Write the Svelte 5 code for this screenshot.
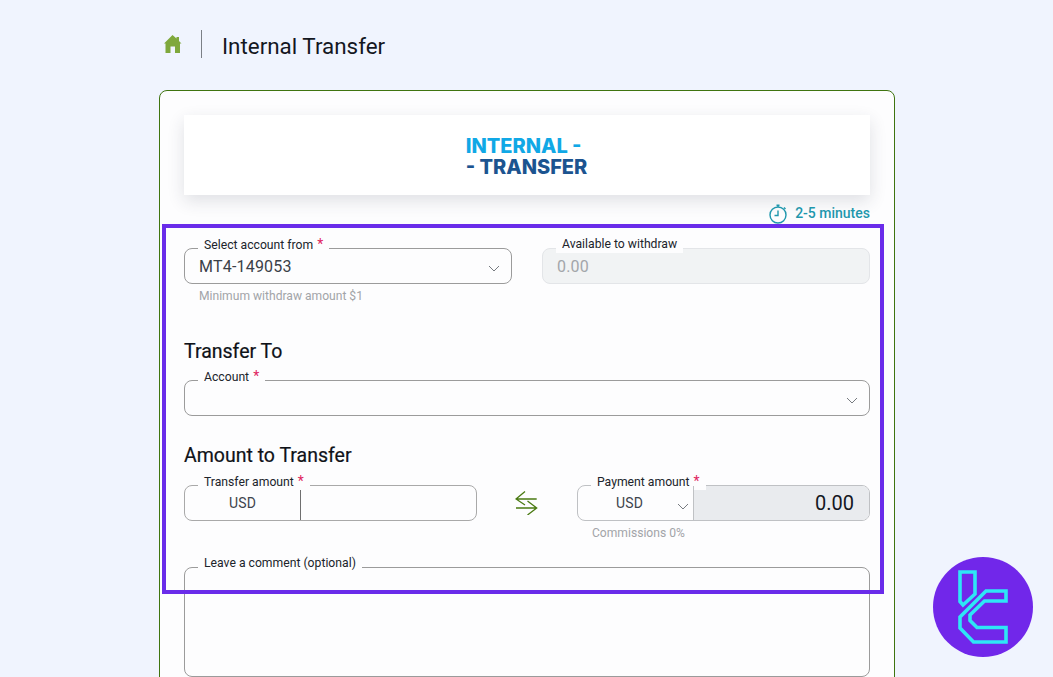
<script>
  const logoA = "37,25 52,25 52,47 40,58 37,54.500";
  const logoB = "83,44 63,44 37,70 37,81 50.500,95 83,95 83,80.500 54,80.500 47,73.500 47,68 61.500,54 83,54";
</script>

<div class="page">
  <header class="head">
    <svg class="home" viewBox="0 0 18 18" aria-hidden="true">
      <path d="M8.500 0 L12.500 3.600 V2 H15 V6 L17.500 8.500 H16 V18 H11 V11.500 H6.500 V18 H1.500 V8.500 H0 Z" fill="#7fa83c" />
    </svg>
    <span class="sep"></span>
    <h1>Internal Transfer</h1>
  </header>

  <main class="card">
    <div class="banner">
      <div class="banner-text">
        <div class="b1">INTERNAL -</div>
        <div class="b2">- TRANSFER</div>
      </div>
    </div>

    <div class="time">
      <svg viewBox="0 0 20 20" class="clock" aria-hidden="true">
        <circle cx="10" cy="11" r="8" />
        <path d="M10 6.500V11.500H6.500M8.500 1.200H11.500M10 1.200V3M16 3.500L17.500 5" />
      </svg>
      <span>2-5 minutes</span>
    </div>

    <div class="two">
      <div class="col">
        <div class="field select">
          <span class="legend">Select account from <em>*</em></span>
          <span class="value">MT4-149053</span>
          <svg class="chev" viewBox="0 0 12 7"><path d="M1 1L6 6L11 1" /></svg>
        </div>
        <p class="hint">Minimum withdraw amount $1</p>
      </div>
      <div class="col">
        <div class="field disabled">
          <span class="legend">Available to withdraw</span>
          <span class="value muted">0.00</span>
        </div>
      </div>
    </div>

    <h2 class="h-to">Transfer To</h2>
    <div class="field select">
      <span class="legend">Account <em>*</em></span>
      <svg class="chev" viewBox="0 0 12 7"><path d="M1 1L6 6L11 1" /></svg>
    </div>

    <h2 class="h-amount">Amount to Transfer</h2>
    <div class="amounts">
      <div class="field transfer">
        <span class="legend">Transfer amount <em>*</em></span>
        <span class="cur">USD</span>
        <span class="rest"></span>
      </div>
      <svg class="swap" viewBox="0 0 24 24" aria-hidden="true">
        <path d="M21.700 8H1M10 0.500L1 8L10 14M1 17H21.700M12.500 10L21.700 17L12.500 24" />
      </svg>
      <div class="pay">
        <div class="field payment">
          <span class="legend">Payment amount <em>*</em></span>
          <span class="pay-cur">
            <span>USD</span>
            <svg class="chev small" viewBox="0 0 12 7"><path d="M1 1L6 6L11 1" /></svg>
          </span>
          <span class="pay-val">0.00</span>
        </div>
        <p class="hint">Commissions 0%</p>
      </div>
    </div>

    <div class="field comment">
      <span class="legend">Leave a comment (optional)</span>
    </div>
  </main>

  <div class="highlight"></div>

  <svg class="logo" viewBox="0 0 120 120" aria-hidden="true">
    <circle cx="60" cy="60" r="50" fill="#7127ea" />
    <g fill="none" stroke="#2ee6f6" stroke-width="3.600" stroke-linejoin="miter">
      <polygon points={logoA} />
      <polygon points={logoB} />
    </g>
  </svg>
</div>

<style>
  :global(html), :global(body) {
    margin: 0;
    height: 100%;
    overflow: hidden;
  }
  :global(body) {
    background: #f0f4fe;
    font-family: Roboto, "Liberation Sans", sans-serif;
  }
  .page {
    position: relative;
    width: 1053px;
    height: 677px;
    overflow: hidden;
    box-sizing: border-box;
    padding-left: 159px;
  }
  .head {
    display: flex;
    align-items: center;
    height: 90px;
    padding-left: 5px;
    box-sizing: border-box;
  }
  .home { width: 18px; height: 18px; margin-top: -2px; }
  .sep {
    width: 1px;
    height: 28px;
    background: #7b7f86;
    margin: -2px 20px 0 19px;
  }
  h1 {
    margin: 2px 0 0;
    font-size: 22.400px;
    font-weight: 400;
    color: #14171f;
    line-height: 28px;
  }
  .card {
    width: 736px;
    height: 640px;
    box-sizing: border-box;
    background: #fdfdfe;
    border: 1px solid #3f7410;
    border-radius: 8px;
    padding: 24px 24px 0;
  }
  .banner {
    height: 80px;
    background: #fff;
    box-shadow: 0 6px 16px rgba(40, 50, 70, 0.14);
    display: flex;
    align-items: center;
    justify-content: center;
  }
  .banner-text {
    font-family: Inter, sans-serif;
    font-weight: 800;
    font-size: 20px;
    line-height: 21px;
    margin: 4px 0 0 -1px;
  }
  .b1 { color: #10a8e6; }
  .b2 { color: #1c5490; }
  .time {
    display: flex;
    justify-content: flex-end;
    align-items: center;
    gap: 7px;
    height: 20px;
    margin-top: 8px;
    color: #1f97ad;
    font-size: 14px;
    font-weight: 500;
  }
  .clock {
    width: 20px;
    height: 20px;
    fill: none;
    stroke: #1f97ad;
    stroke-width: 1.400;
    margin-top: 2px;
  }
  .two {
    display: flex;
    gap: 30px;
    margin-top: 25px;
  }
  .col { flex: 1; min-width: 0; }
  .field {
    position: relative;
    box-sizing: border-box;
    height: 36px;
    border: 1px solid #9b9b9b;
    border-radius: 8px;
    display: flex;
    align-items: center;
  }
  .legend {
    position: absolute;
    left: 13px;
    top: -15px;
    background: #fdfdfe;
    padding: 0 6px;
    font-size: 12.200px;
    line-height: 20px;
    height: 19px;
    color: #20242b;
    white-space: nowrap;
  }
  .legend em {
    font-style: normal;
    color: #e0245e;
    margin-left: 1px;
    font-size: 14px;
  }
  .value {
    padding-left: 14px;
    font-size: 16px;
    color: #3a4048;
    letter-spacing: 0.2px;
  }
  .muted { color: #a3a6aa; }
  .disabled {
    background: #f1f3f4;
    border-color: #e3e5e8;
  }
  .chev {
    position: absolute;
    right: 11px;
    top: 16px;
    width: 12px;
    height: 7px;
    fill: none;
    stroke: #777b80;
    stroke-width: 1;
  }
  .chev.small { right: 4px; top: 17px; }
  .hint {
    margin: 5px 0 0 15px;
    font-size: 12.100px;
    line-height: 14px;
    color: #a2a4a8;
  }
  h2 {
    margin: 0;
    font-size: 19.500px;
    font-weight: 400;
    line-height: 24px;
    color: #0f1218;
    -webkit-text-stroke: 0.2px #0f1218;
  }
  .h-to { margin-top: 37px; margin-bottom: 16px; }
  .h-amount { margin-top: 28px; margin-bottom: 17px; }
  .amounts {
    display: flex;
    align-items: flex-start;
  }
  .transfer {
    width: 293px;
    flex: none;
    border-color: #a9a9a9;
  }
  .cur {
    width: 116px;
    box-sizing: border-box;
    text-align: center;
    font-size: 14px;
    color: #3e444c;
    height: 34px;
    line-height: 34px;
    letter-spacing: 0.2px;
    border-right: 1px solid #6f6f6f;
  }
  .rest { flex: 1; }
  .swap {
    flex: none;
    width: 24px;
    height: 24px;
    margin: 6px 38px 0 38px;
    fill: none;
    stroke: #4a7a12;
    stroke-width: 1.300;
  }
  .payment {
    border-color: #bfc1c4;
  }
  .pay { flex: 1; min-width: 0; }
  .pay-cur {
    position: relative;
    width: 116px;
    height: 34px;
    line-height: 34px;
    box-sizing: border-box;
    padding-left: 38px;
    font-size: 14px;
    color: #3e444c;
    letter-spacing: 0.2px;
    border-right: 1px solid #bfc1c4;
  }
  .pay-val {
    flex: 1;
    height: 34px;
    line-height: 34px;
    text-align: right;
    padding-right: 15px;
    font-size: 20px;
    color: #14171f;
    background: #e9ebee;
    border-radius: 0 7px 7px 0;
  }
  .comment {
    height: 110px;
    margin-top: 27px;
  }
  .highlight {
    position: absolute;
    left: 162px;
    top: 224px;
    width: 722px;
    height: 370px;
    box-sizing: border-box;
    border: 4px solid #6a2cea;
    pointer-events: none;
  }
  .logo {
    position: absolute;
    left: 923px;
    top: 547px;
    width: 120px;
    height: 120px;
  }
</style>
